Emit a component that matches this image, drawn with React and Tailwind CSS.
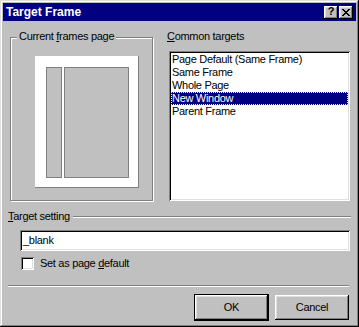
import React from 'react';

const raised =
  'shadow-[inset_-1px_-1px_0_#000,inset_1px_1px_0_#fff,inset_-2px_-2px_0_#808080,inset_2px_2px_0_#dfdfdf]';
const sunken =
  'shadow-[inset_1px_1px_0_#808080,inset_-1px_-1px_0_#fff,inset_2px_2px_0_#000,inset_-2px_-2px_0_#dfdfdf]';

const closeRows = [
  'XX....XX',
  '.XX..XX.',
  '..XXXX..',
  '...XX...',
  '..XXXX..',
  '.XX..XX.',
  'XX....XX',
];

const CloseGlyph = () => (
  <svg width="8" height="7" viewBox="0 0 8 7" shapeRendering="crispEdges">
    {closeRows.map((row, y) =>
      row.split('').map((c, x) =>
        c === 'X' ? <rect key={`${x}-${y}`} x={x} y={y} width="1" height="1" fill="#000" /> : null
      )
    )}
  </svg>
);

const targets = [
  'Page Default (Same Frame)',
  'Same Frame',
  'Whole Page',
  'New Window',
  'Parent Frame',
];

const TitleBar = () => (
  <div className="h-[18px] bg-[#000080] flex items-center justify-between pl-[3px] pr-[3px]">
    <span className="text-white font-bold text-[12px] leading-[14px] tracking-normal">Target Frame</span>
    <div className="flex gap-[1px]">
      <div className={`w-[14px] h-[13px] bg-[#c0c0c0] flex items-center justify-center ${raised}`}>
        <span className="font-bold text-[11px] leading-[11px] tracking-normal -mt-[1px]">?</span>
      </div>
      <div className={`w-[14px] h-[13px] bg-[#c0c0c0] flex items-center justify-center ${raised}`}>
        <CloseGlyph />
      </div>
    </div>
  </div>
);

export default function App() {
  return (
    <div className="w-[359px] h-[327px] bg-[#c0c0c0] p-[3px] flex flex-col text-black text-[11px] leading-[13px] tracking-[-0.3px] font-['Liberation_Sans',Arial,sans-serif] select-none shadow-[inset_-1px_-1px_0_#000,inset_1px_1px_0_#dfdfdf,inset_-2px_-2px_0_#808080,inset_2px_2px_0_#fff]">
      <TitleBar />

      <div className="flex flex-col flex-1">
        {/* top row: preview group + common targets list */}
        <div className="flex items-start pt-[9px]">
          <div className="relative ml-[7px] mt-[7px] w-[143px] h-[164px] border border-[#808080] shadow-[inset_1px_1px_0_#fff,1px_1px_0_#fff] pl-[24px] pt-[18px]">
            <span className="absolute -top-[8px] left-[6px] px-[2px] bg-[#c0c0c0]">
              Current <u>f</u>rames page
            </span>
            <div className="w-[104px] h-[132px] bg-white border-r border-b border-[#808080] pl-[11px] pt-[11px] flex gap-[2px]">
              <div className="w-[16px] h-[111px] bg-[#c0c0c0] border border-[#808080]" />
              <div className="w-[65px] h-[111px] bg-[#c0c0c0] border border-[#808080]" />
            </div>
          </div>

          <div className="ml-[13px] flex flex-col">
            <span className="pl-[1px]">
              <u>C</u>ommon targets
            </span>
            <div className={`ml-[3px] mt-[8px] w-[181px] h-[150px] bg-white p-[2px] ${sunken}`}>
              {targets.map((t, i) => (
                <div
                  key={t}
                  className={
                    i === 3
                      ? 'h-[13px] pl-[1px] bg-[#000080] text-white outline-1 outline-dotted outline-[#ffff80] -outline-offset-1'
                      : 'h-[13px] pl-[1px]'
                  }
                >
                  {t}
                </div>
              ))}
            </div>
          </div>
        </div>

        {/* target setting */}
        <div className="flex items-start mt-[9px] pl-[5px] pr-[5px]">
          <span>
            <u>T</u>arget setting
          </span>
          <div className="flex-1 ml-[3px] mt-[6px] h-[2px] border-t border-[#808080] border-b border-b-white" />
        </div>

        <div className={`ml-[17px] mr-[6px] mt-[7px] h-[21px] bg-white flex items-center pl-[3px] ${sunken}`}>
          _blank
        </div>

        <div className="flex items-start ml-[18px] mt-[6px]">
          <div className={`w-[13px] h-[13px] bg-white ${sunken}`} />
          <span className="ml-[6px]">
            Set as page <u>d</u>efault
          </span>
        </div>

        <div className="ml-[5px] mr-[7px] mt-[15px] h-[2px] border-t border-[#808080] border-b border-b-white" />

        <div className="flex justify-end items-center gap-[6px] mt-[7px] pr-[7px]">
          <div className="w-[75px] h-[27px] border border-black">
            <div className={`w-full h-full flex items-center justify-center ${raised}`}>OK</div>
          </div>
          <div className={`w-[74px] h-[25px] flex items-center justify-center ${raised}`}>Cancel</div>
        </div>
      </div>
    </div>
  );
}
